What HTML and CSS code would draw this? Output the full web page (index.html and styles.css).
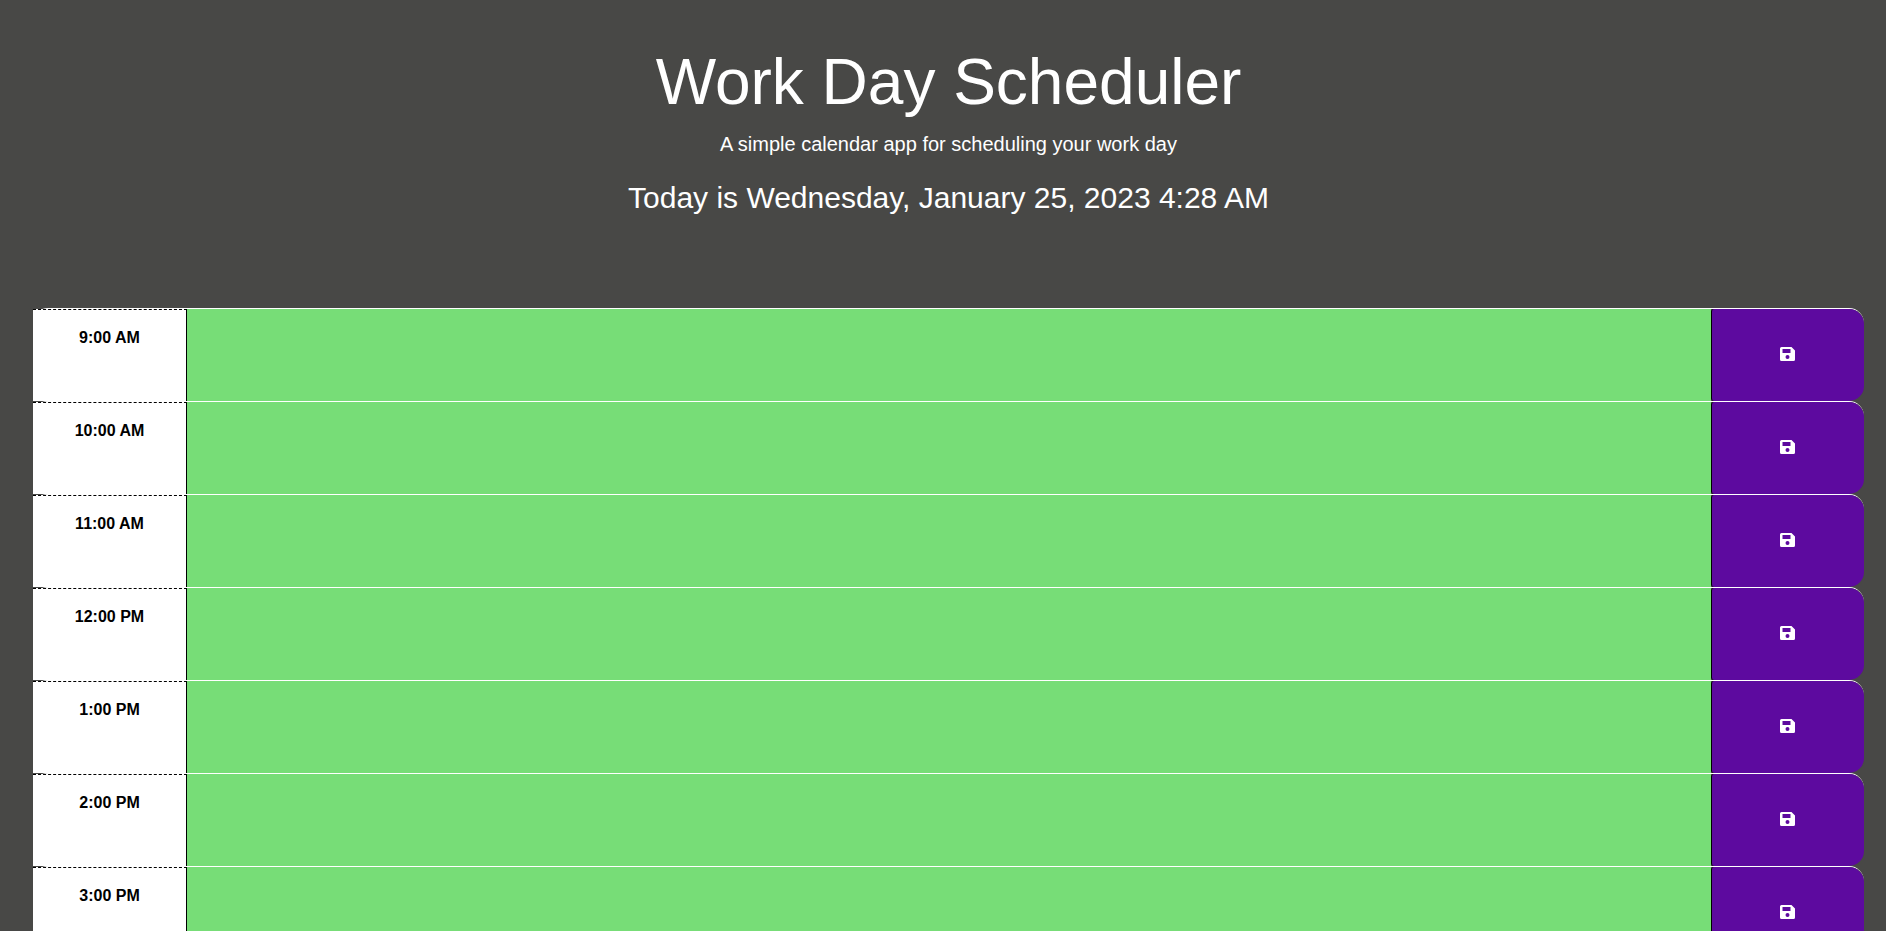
FILE: index.html
```html
<!DOCTYPE html>
<html lang="en">
<head>
<meta charset="utf-8">
<meta name="viewport" content="width=device-width, initial-scale=1">
<title>Work Day Scheduler</title>
<link rel="stylesheet" href="styles.css">
</head>
<body>
<svg class="sprite" aria-hidden="true">
  <symbol id="save" viewBox="0 0 15 14">
    <path fill-rule="evenodd" d="M1.5 0H11.5L15 3.5V12.5Q15 14 13.5 14H1.5Q0 14 0 12.5V1.5Q0 0 1.5 0ZM2.5 2V6H10.5V2ZM7.5 8A2 2 0 1 0 7.5 12A2 2 0 1 0 7.5 8Z"/>
  </symbol>
</svg>
<header class="jumbotron">
  <h1 class="title">Work Day Scheduler</h1>
  <p class="lead">A simple calendar app for scheduling your work day</p>
  <p class="today">Today is Wednesday, January 25, 2023 4:28 AM</p>
</header>
<main class="schedule">
  <div class="time-block">
    <label class="hour" for="h9">9:00 AM</label>
    <textarea class="task" id="h9"></textarea>
    <button class="save" type="button" aria-label="Save 9:00 AM"><svg class="icon"><use href="#save"/></svg></button>
  </div>
  <div class="time-block">
    <label class="hour" for="h10">10:00 AM</label>
    <textarea class="task" id="h10"></textarea>
    <button class="save" type="button" aria-label="Save 10:00 AM"><svg class="icon"><use href="#save"/></svg></button>
  </div>
  <div class="time-block">
    <label class="hour" for="h11">11:00 AM</label>
    <textarea class="task" id="h11"></textarea>
    <button class="save" type="button" aria-label="Save 11:00 AM"><svg class="icon"><use href="#save"/></svg></button>
  </div>
  <div class="time-block">
    <label class="hour" for="h12">12:00 PM</label>
    <textarea class="task" id="h12"></textarea>
    <button class="save" type="button" aria-label="Save 12:00 PM"><svg class="icon"><use href="#save"/></svg></button>
  </div>
  <div class="time-block">
    <label class="hour" for="h13">1:00 PM</label>
    <textarea class="task" id="h13"></textarea>
    <button class="save" type="button" aria-label="Save 1:00 PM"><svg class="icon"><use href="#save"/></svg></button>
  </div>
  <div class="time-block">
    <label class="hour" for="h14">2:00 PM</label>
    <textarea class="task" id="h14"></textarea>
    <button class="save" type="button" aria-label="Save 2:00 PM"><svg class="icon"><use href="#save"/></svg></button>
  </div>
  <div class="time-block">
    <label class="hour" for="h15">3:00 PM</label>
    <textarea class="task" id="h15"></textarea>
    <button class="save" type="button" aria-label="Save 3:00 PM"><svg class="icon"><use href="#save"/></svg></button>
  </div>
</main>
</body>
</html>
```

FILE: styles.css
```css
* {
  box-sizing: border-box;
}

body {
  margin: 0;
  padding: 0 22px 0 33px;
  background: #484846;
  color: #000;
  font-family: Arial, "Liberation Sans", sans-serif;
  font-size: 16px;
  line-height: 24px;
}

.sprite {
  display: none;
}

.jumbotron {
  padding: 44px 0 88px;
  color: #fff;
  text-align: center;
}

.title {
  margin: 0 0 8px;
  font-size: 64px;
  font-weight: 400;
  line-height: 77px;
}

.lead {
  margin: 0 0 16px;
  font-size: 20px;
  line-height: 30px;
}

.today {
  margin: 0;
  font-size: 30px;
  line-height: 45px;
}

.time-block {
  display: grid;
  grid-template-columns: 154px 1fr 153px;
  border-top: 1px solid #fff;
  border-radius: 15px;
}

.hour {
  padding: 16px 0;
  border-top: 1px dashed #000;
  border-right: 1px solid #000;
  background: #fff;
  font-weight: 700;
  text-align: center;
}

.task {
  display: block;
  width: 100%;
  height: 92px;
  margin: 0;
  padding: 8px;
  border: 0;
  background: #77dd77;
  color: #000;
  font: inherit;
  resize: none;
}

.save {
  display: flex;
  align-items: center;
  justify-content: center;
  margin: 0;
  padding: 0 2px 2px 0;
  border: 0;
  border-left: 1px solid #000;
  border-radius: 3px 15px 15px 3px;
  background: #5d0a9f;
  color: #fff;
  cursor: pointer;
}

.icon {
  width: 15px;
  height: 14px;
  fill: currentColor;
}
```
